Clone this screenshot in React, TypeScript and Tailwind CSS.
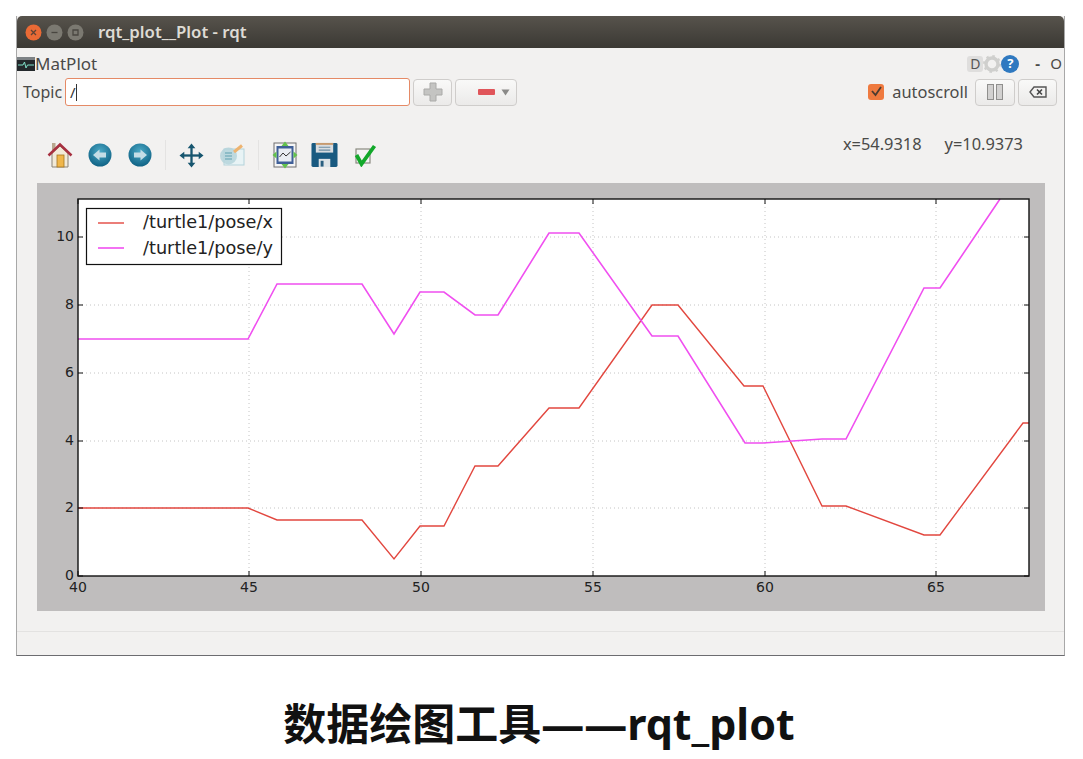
const redLine = "78,508 248,508 277,520 362,520 394,559 420,526 444,526 475,466 498,466 549,408 579,408 652,305 678,305 744,386 763,386 822,506 846,506 924,535 940,535 1023,423 1029,423";
const magentaLine = "78,339 248,339 277,284 362,284 394,334 420,292 444,292 475,315 498,315 549,233 579,233 652,336 678,336 745,443 763,443 822,439 846,439 924,288 940,288 1000,199";

const xTicks = [
  { x: 78, label: "40" },
  { x: 249, label: "45" },
  { x: 421, label: "50" },
  { x: 593, label: "55" },
  { x: 765, label: "60" },
  { x: 936, label: "65" },
];
const yTicks = [
  { y: 576, label: "0" },
  { y: 508, label: "2" },
  { y: 441, label: "4" },
  { y: 373, label: "6" },
  { y: 305, label: "8" },
  { y: 237, label: "10" },
];

function Chart() {
  return (
    <svg width="1008" height="428" viewBox="37 183 1008 428" className="block">
      <rect x="78" y="199" width="951" height="377" fill="#ffffff" />
      {xTicks.slice(1).map((t) => (
        <line key={t.x} x1={t.x} x2={t.x} y1="199" y2="576" stroke="#c4c4c4" strokeWidth="1" strokeDasharray="1 3" />
      ))}
      {yTicks.slice(1).map((t) => (
        <line key={t.y} x1="78" x2="1029" y1={t.y} y2={t.y} stroke="#c4c4c4" strokeWidth="1" strokeDasharray="1 3" />
      ))}
      <polyline points={redLine} fill="none" stroke="#e2473f" strokeWidth="1.4" />
      <polyline points={magentaLine} fill="none" stroke="#f04ff0" strokeWidth="1.6" />
      <rect x="78" y="199" width="951" height="377" fill="none" stroke="#111111" strokeWidth="1.4" />
      {xTicks.map((t) => (
        <g key={t.x}>
          <line x1={t.x} x2={t.x} y1="576" y2="571" stroke="#111111" />
          <line x1={t.x} x2={t.x} y1="199" y2="204" stroke="#111111" />
          <text x={t.x} y="592" textAnchor="middle" fontFamily="DejaVu Sans, sans-serif" fontSize="14" fill="#222222">{t.label}</text>
        </g>
      ))}
      {yTicks.map((t) => (
        <g key={t.y}>
          <line x1="78" x2="83" y1={t.y} y2={t.y} stroke="#111111" />
          <line x1="1029" x2="1024" y1={t.y} y2={t.y} stroke="#111111" />
          <text x="74" y={t.y + 4} textAnchor="end" fontFamily="DejaVu Sans, sans-serif" fontSize="14" fill="#222222">{t.label}</text>
        </g>
      ))}
      {/* legend */}
      <rect x="86.5" y="208.5" width="195" height="56" fill="#ffffff" stroke="#111111" strokeWidth="1.2" />
      <line x1="98" x2="124" y1="223" y2="223" stroke="#e2473f" strokeWidth="1.4" />
      <line x1="98" x2="124" y1="248" y2="248" stroke="#f04ff0" strokeWidth="1.6" />
      <text x="143" y="228" fontFamily="DejaVu Sans, sans-serif" fontSize="17.7" fill="#222222">/turtle1/pose/x</text>
      <text x="143" y="254" fontFamily="DejaVu Sans, sans-serif" fontSize="17.7" fill="#222222">/turtle1/pose/y</text>
    </svg>
  );
}

function WindowButton({ color, glyph }: { color: string; glyph: string }) {
  return (
    <svg width="17" height="17" viewBox="0 0 17 17">
      <circle cx="8.5" cy="8.5" r="8" fill={color} />
      <path d={glyph} stroke="#3d3a35" strokeWidth="1.3" fill="none" opacity="0.8" />
    </svg>
  );
}

function HomeIcon() {
  return (
    <svg width="26" height="28" viewBox="0 0 26 28">
      <rect x="5" y="2" width="3.5" height="7" fill="#b9a78e" />
      <path d="M5 12 L13 5 L21 12 V26 H5 Z" fill="#f2ead8" stroke="#8a8378" />
      <rect x="10" y="14" width="7" height="12" fill="#f0b64a" stroke="#a5761f" strokeWidth="0.8" />
      <path d="M1.5 14.5 L13 3.5 L24.5 14.5" fill="none" stroke="#a73040" strokeWidth="2.6" />
    </svg>
  );
}

function NavIcon({ dir }: { dir: "left" | "right" }) {
  return (
    <svg width="24" height="24" viewBox="0 0 24 24">
      <defs>
        <radialGradient id={`nav-${dir}`} cx="50%" cy="35%" r="70%">
          <stop offset="0%" stopColor="#4ba9c6" />
          <stop offset="100%" stopColor="#0b5d80" />
        </radialGradient>
      </defs>
      <circle cx="12" cy="12" r="11.5" fill={`url(#nav-${dir})`} />
      <path
        d={dir === "left" ? "M5 12 L11.5 6.5 V9.5 H18 V14.5 H11.5 V17.5 Z" : "M19 12 L12.5 6.5 V9.5 H6 V14.5 H12.5 V17.5 Z"}
        fill="#c4dde6"
      />
    </svg>
  );
}

function MoveIcon() {
  return (
    <svg width="25" height="25" viewBox="0 0 26 26" fill="#17566f">
      <rect x="11.8" y="3" width="2.4" height="20" />
      <rect x="3" y="11.8" width="20" height="2.4" />
      <path d="M13 0.5 L17 5.5 H9 Z M13 25.5 L17 20.5 H9 Z M0.5 13 L5.5 9 V17 Z M25.5 13 L20.5 9 V17 Z" />
    </svg>
  );
}

function ZoomIcon() {
  return (
    <svg width="26" height="24" viewBox="0 0 26 24">
      <rect x="5" y="6" width="20" height="16" fill="#e8f3f5" stroke="#b4d3da" />
      <circle cx="9.5" cy="13" r="8.5" fill="#b5d3da" opacity="0.85" />
      <path d="M6 10 H13 M6 13 H13 M6 16 H13" stroke="#5f9fb0" strokeWidth="1.2" />
      <path d="M15 9 L23 2.5" stroke="#eeb36f" strokeWidth="3" />
    </svg>
  );
}

function SubplotIcon() {
  return (
    <svg width="26" height="28" viewBox="0 0 26 28">
      <rect x="2" y="2" width="22" height="24" fill="#f5f5f5" stroke="#6f6f6f" />
      <rect x="4.5" y="5" width="17" height="18" fill="#3f5f98" />
      <rect x="6.5" y="7.5" width="13" height="13" fill="#e9edf3" />
      <path d="M7.5 16 L11 12 L14 15 L18.5 11" stroke="#333333" strokeWidth="1" fill="none" />
      <path d="M13 0.5 L16.5 5 H9.5 Z M13 27.5 L16.5 23 H9.5 Z M0.5 14 L4.5 10.5 V17.5 Z M25.5 14 L21.5 10.5 V17.5 Z" fill="#63c24d" />
    </svg>
  );
}

function SaveIcon() {
  return (
    <svg width="27" height="26" viewBox="0 0 28 26">
      <path d="M2 0.5 H26 Q27.5 0.5 27.5 2 V24 Q27.5 25.5 26 25.5 H2 Q0.5 25.5 0.5 24 V2 Q0.5 0.5 2 0.5 Z" fill="#195a80" />
      <rect x="5" y="0.5" width="18" height="10" fill="#d9dde0" />
      <rect x="5" y="0.5" width="18" height="2" fill="#c69a6e" />
      <path d="M8 5 H20 M8 8 H20" stroke="#6d8ea3" strokeWidth="1.2" />
      <rect x="8" y="17" width="12" height="8.5" fill="#dfe4e7" />
      <rect x="10" y="19" width="3" height="6" fill="#2a5f80" />
    </svg>
  );
}

function CheckIcon() {
  return (
    <svg width="24" height="24" viewBox="0 0 24 24">
      <rect x="3" y="6" width="14" height="14" fill="#f3f3f3" stroke="#8a8a80" strokeWidth="1.2" />
      <path d="M3.5 12 L8.5 21 L21.5 3" fill="none" stroke="#12a82a" strokeWidth="3.8" />
    </svg>
  );
}

function ToolbarSep() {
  return <div className="h-[30px] w-px bg-[#e4e3e2]" />;
}

const qtButton = "flex h-[27px] items-center justify-center rounded-[4px] border border-[#cfcdcb] bg-gradient-to-b from-[#f9f9f8] to-[#ebeae9]";

export default function App() {
  return (
    <div className="flex h-[759px] w-[1083px] flex-col overflow-hidden bg-white">
      <div className="ml-4 mt-4 flex h-[640px] w-[1049px] flex-col border-x border-b border-x-[#a8a8a8] border-b-[#6c6c70] bg-[#f2f1f0] text-[#4a4a48] font-['Noto_Sans',sans-serif]">
        {/* title bar */}
        <div className="flex h-8 shrink-0 items-center rounded-t-[5px] bg-gradient-to-b from-[#57534c] to-[#3b3934] pl-[8px]">
          <div className="flex items-center gap-[4px]">
            <WindowButton color="#ea6a35" glyph="M6 6 L11 11 M11 6 L6 11" />
            <WindowButton color="#7b7971" glyph="M5.5 8.5 H11.5" />
            <WindowButton color="#7b7971" glyph="M6 6 H11 V11 H6 Z" />
          </div>
          <span className="ml-[14px] text-[16.8px] font-semibold leading-none text-[#dedbd4]">rqt_plot__Plot - rqt</span>
        </div>

        {/* plugin header */}
        <div className="flex h-[26px] shrink-0 items-center justify-between pr-[2px] pt-[5px]">
          <div className="flex items-center">
            <svg width="18" height="14" viewBox="0 0 18 14">
              <rect width="18" height="14" fill="#23282b" />
              <rect y="0" width="18" height="3" fill="#7d8285" />
              <path d="M1 8 H6 L7.5 5 L9 11 L10.5 8 H17" stroke="#7fe0c8" strokeWidth="1" fill="none" />
            </svg>
            <span className="text-[17px] leading-none">MatPlot</span>
          </div>
          <div className="flex items-center">
            <span className="flex h-[16px] w-[16px] items-center justify-center rounded-[3px] bg-[#dfdedd] text-[14px] leading-none text-[#555555]">D</span>
            <svg width="18" height="18" viewBox="0 0 18 18">
              <circle cx="9" cy="9" r="6" fill="none" stroke="#cfcfcd" strokeWidth="3.4" />
              <circle cx="9" cy="9" r="8" fill="none" stroke="#cfcfcd" strokeWidth="2" strokeDasharray="2.5 3.8" />
            </svg>
            <span className="flex h-[18px] w-[18px] items-center justify-center rounded-full bg-[#2f79c0] text-[13px] font-bold leading-none text-white">?</span>
            <span className="ml-[16px] w-[8px] text-[15px] font-bold leading-none">-</span>
            <span className="ml-[7px] text-[15px] leading-none">O</span>
          </div>
        </div>

        {/* topic row */}
        <div className="mt-1 flex h-[28px] shrink-0 items-center pl-[6px] pr-[7px]">
          <span className="text-[16px] leading-none">Topic</span>
          <div className="ml-[3px] flex h-[28px] w-[345px] items-center rounded-[3px] border border-[#e58a66] bg-white pl-[4px] text-[15px] text-[#333333]">
            /<span className="h-[17px] w-px bg-[#333333]" />
          </div>
          <div className={`${qtButton} ml-[3px] w-[39px]`}>
            <svg width="20" height="20" viewBox="0 0 20 20">
              <path d="M7 1 H13 V7 H19 V13 H13 V19 H7 V13 H1 V7 H7 Z" fill="#c4c4c2" stroke="#aaaaa8" />
            </svg>
          </div>
          <div className={`${qtButton} ml-[3px] w-[62px] gap-[6px] pl-[16px]`}>
            <span className="h-[6px] w-[17px] rounded-[1px] bg-[#e0555a]" />
            <svg width="9" height="7" viewBox="0 0 9 7"><path d="M0.5 0.5 H8.5 L4.5 6.5 Z" fill="#8a8a88" /></svg>
          </div>
          <div className="ml-auto flex items-center">
            <span className="flex h-[16px] w-[16px] items-center justify-center rounded-[3px] bg-[#ef7a3f]">
              <svg width="14" height="14" viewBox="0 0 14 14"><path d="M3 6 L6.5 10 L12 2" fill="none" stroke="#4c3b30" strokeWidth="1.8" /></svg>
            </span>
            <span className="ml-[8px] text-[16.4px] leading-none">autoscroll</span>
            <div className={`${qtButton} ml-[7px] w-[40px] gap-[2px] bg-gradient-to-b from-[#f3f3f2] to-[#dddcdb]`}>
              <span className="h-[16px] w-[7px] border border-[#8f8f8d] bg-[#d2d1d0]" />
              <span className="h-[16px] w-[7px] border border-[#8f8f8d] bg-[#d2d1d0]" />
            </div>
            <div className={`${qtButton} ml-[3px] w-[39px]`}>
              <svg width="18" height="12" viewBox="0 0 18 12">
                <path d="M5 1 H17 V11 H5 L1 6 Z" fill="none" stroke="#555555" strokeWidth="1.4" />
                <path d="M8 3.5 L13 8.5 M13 3.5 L8 8.5" stroke="#444444" strokeWidth="1.6" />
              </svg>
            </div>
          </div>
        </div>

        {/* matplotlib toolbar */}
        <div className="flex h-[77px] shrink-0 items-start justify-between pl-[30px] pr-[41px]">
          <div className="mt-[34px] flex items-center">
            <HomeIcon />
            <div className="ml-[15px]"><NavIcon dir="left" /></div>
            <div className="ml-[16px]"><NavIcon dir="right" /></div>
            <div className="ml-[13px]"><ToolbarSep /></div>
            <div className="ml-[13px]"><MoveIcon /></div>
            <div className="ml-[15px]"><ZoomIcon /></div>
            <div className="ml-[13px]"><ToolbarSep /></div>
            <div className="ml-[13px]"><SubplotIcon /></div>
            <div className="ml-[13px]"><SaveIcon /></div>
            <div className="ml-[15px]"><CheckIcon /></div>
          </div>
          <div className="mt-[30px] flex gap-[23px] text-[16.4px] leading-none">
            <span>x=54.9318</span>
            <span>y=10.9373</span>
          </div>
        </div>

        {/* plot canvas */}
        <div className="ml-5 h-[428px] w-[1008px] shrink-0 bg-[#bfbdbd]">
          <Chart />
        </div>

        <div className="mt-5 flex-1 border-t border-[#e3e2e1]" />
      </div>

      <h1 className="mt-[38px] self-center pr-[5px] text-[43px] font-bold leading-[60px] text-[#111111] font-['Noto_Sans','Noto_Sans_CJK_SC',sans-serif]">
        数据绘图工具——rqt_plot
      </h1>
    </div>
  );
}
